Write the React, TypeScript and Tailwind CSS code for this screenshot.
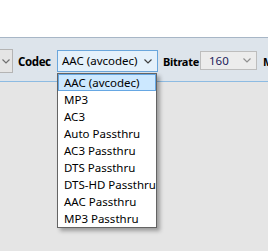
import React from "react";

function Chevron({ color }: { color: string }) {
  return (
    <svg width="8" height="5" viewBox="0 0 8 5" className="block">
      <path d="M0.5 0.5 L4 4 L7.5 0.5" fill="none" stroke={color} strokeWidth="1.2" />
    </svg>
  );
}

const items = [
  "AAC (avcodec)",
  "MP3",
  "AC3",
  "Auto Passthru",
  "AC3 Passthru",
  "DTS Passthru",
  "DTS-HD Passthru",
  "AAC Passthru",
  "MP3 Passthru",
];

export default function App() {
  return (
    <div
      className="relative w-[268px] h-[251px] overflow-hidden bg-[#e5e5e5] text-[11.5px] text-black"
      style={{ fontFamily: '"Noto Sans", "Open Sans", sans-serif' }}
    >
      <div className="h-[37px] bg-white" />
      <div className="h-px bg-[#a7b6c6]" />
      <div className="h-[43px] bg-[#dde4eb] flex items-start pt-[11px] whitespace-nowrap">
        <div className="shrink-0 w-[13px] h-[24px] border-y border-r border-[#b4b4b4] bg-[#e5e5e5] flex items-center pl-[2px]">
          <Chevron color="#707070" />
        </div>
        <div className="shrink-0 ml-[5px] w-[39px] h-[22px] mt-[2px] leading-[22px] font-bold text-[11.5px] tracking-[-0.4px]">Codec</div>
        <div className="shrink-0 w-[101px] h-[22px] mt-px border border-[#6aa6dc] bg-[#e5f1fb] flex items-center justify-between pl-[4px] pr-[5px]">
          <span className="leading-none">AAC (avcodec)</span>
          <Chevron color="#404040" />
        </div>
        <div className="shrink-0 ml-[5px] w-[37px] h-[22px] mt-[2px] leading-[22px] font-bold text-[11px] tracking-[-0.3px]">Bitrate</div>
        <div className="shrink-0 w-[57px] h-[19px] mt-[2px] border border-[#bdbdbd] bg-[#ececec] flex items-center justify-between pl-[8px] pr-[5px]">
          <span className="leading-none text-[#1c1c5c]">160</span>
          <Chevron color="#909090" />
        </div>
        <div className="shrink-0 ml-[6px] h-[22px] mt-[2px] leading-[22px] font-bold text-[11px]">M</div>
      </div>
      <div className="h-px bg-[#8dbbe2]" />

      <div className="absolute left-[57px] top-[73px] w-[100px] h-[155px] border border-[#646464] bg-white shadow-[3px_3px_4px_rgba(0,0,0,0.32)] flex flex-col">
        {items.map((t, i) => (
          <div
            key={t}
            className={
              i === 0
                ? "h-[17px] shrink-0 border border-[#66a7e3] bg-[#cce8ff] pl-[5px] leading-[15px] whitespace-nowrap"
                : "h-[17px] shrink-0 pl-[6px] leading-[17px] whitespace-nowrap"
            }
          >
            {t}
          </div>
        ))}
      </div>
    </div>
  );
}
